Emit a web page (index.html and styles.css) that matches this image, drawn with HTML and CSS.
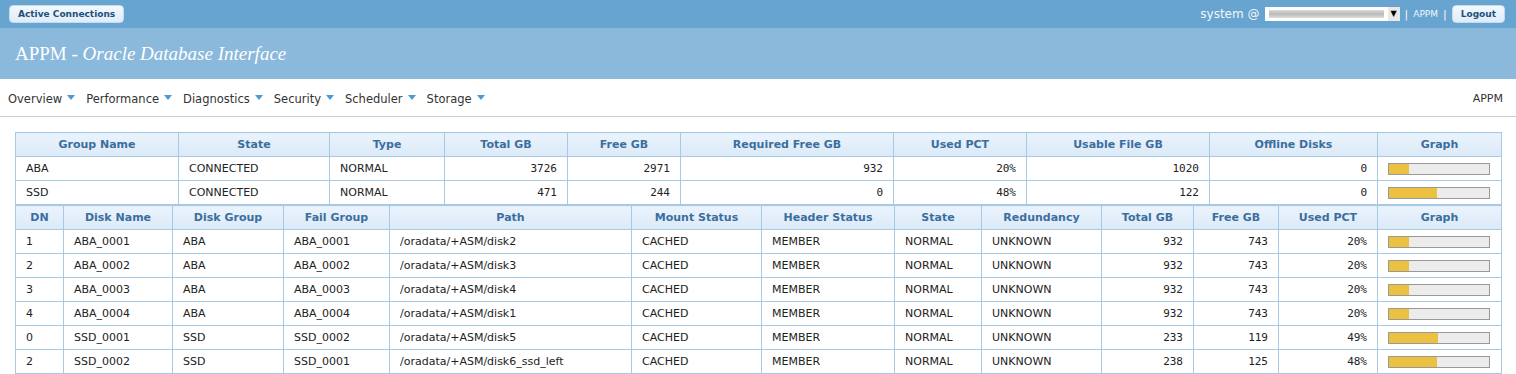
FILE: index.html
```html
<!DOCTYPE html>
<html lang="en">
<head>
    <meta charset="UTF-8">
    <title>APPM - Oracle Database Interface</title>
    <link rel="stylesheet" href="styles.css">
</head>
<body>
    <div class="topbar">
        <button class="btn">Active Connections</button>
        <div class="user-box">
            <span class="user">system @</span>
            <span class="db-select"><span class="blur"></span><span class="arrow">&#9660;</span></span>
            <span class="sep">|</span>
            <span class="small-link">APPM</span>
            <span class="sep">|</span>
            <button class="btn">Logout</button>
        </div>
    </div>
    <div class="title-band">
        <h1>APPM - <em>Oracle Database Interface</em></h1>
    </div>
    <div class="menu">
        <ul>
            <li>Overview<span class="caret"></span></li>
            <li>Performance<span class="caret"></span></li>
            <li>Diagnostics<span class="caret"></span></li>
            <li>Security<span class="caret"></span></li>
            <li>Scheduler<span class="caret"></span></li>
            <li>Storage<span class="caret"></span></li>
        </ul>
        <span class="menu-right">APPM</span>
    </div>

    <div class="content">
        <table class="grid groups">
            <colgroup>
                <col class="w163"><col class="w151"><col class="w115"><col class="w123"><col class="w113">
                <col class="w213"><col class="w133"><col class="w183"><col class="w168"><col class="w124">
            </colgroup>
            <thead>
                <tr>
                    <th>Group Name</th><th>State</th><th>Type</th><th>Total GB</th><th>Free GB</th>
                    <th>Required Free GB</th><th>Used PCT</th><th>Usable File GB</th><th>Offline Disks</th><th>Graph</th>
                </tr>
            </thead>
            <tbody id="groups"></tbody>
        </table>

        <table class="grid disks">
            <colgroup>
                <col class="w48"><col class="w109"><col class="w111"><col class="w106"><col class="w242">
                <col class="w130"><col class="w133"><col class="w87"><col class="w120"><col class="w92">
                <col class="w85"><col class="w99"><col class="w124">
            </colgroup>
            <thead>
                <tr>
                    <th>DN</th><th>Disk Name</th><th>Disk Group</th><th>Fail Group</th><th>Path</th>
                    <th>Mount Status</th><th>Header Status</th><th>State</th><th>Redundancy</th>
                    <th>Total GB</th><th>Free GB</th><th>Used PCT</th><th>Graph</th>
                </tr>
            </thead>
            <tbody id="disks"></tbody>
        </table>
    </div>

    <script>
        const grupos = [
            ['ABA', 'CONNECTED', 'NORMAL', 3726, 2971, 932, 20, 1020, 0],
            ['SSD', 'CONNECTED', 'NORMAL', 471, 244, 0, 48, 122, 0]
        ];
        const discos = [
            [1, 'ABA_0001', 'ABA', 'ABA_0001', '/oradata/+ASM/disk2', 932, 743, 20],
            [2, 'ABA_0002', 'ABA', 'ABA_0002', '/oradata/+ASM/disk3', 932, 743, 20],
            [3, 'ABA_0003', 'ABA', 'ABA_0003', '/oradata/+ASM/disk4', 932, 743, 20],
            [4, 'ABA_0004', 'ABA', 'ABA_0004', '/oradata/+ASM/disk1', 932, 743, 20],
            [0, 'SSD_0001', 'SSD', 'SSD_0002', '/oradata/+ASM/disk5', 233, 119, 49],
            [2, 'SSD_0002', 'SSD', 'SSD_0001', '/oradata/+ASM/disk6_ssd_left', 238, 125, 48]
        ];

        function barra(pct) {
            return `<div class="bar"><div class="fill" style="width:${pct}%"></div></div>`;
        }

        document.getElementById('groups').innerHTML = grupos.map(g => `
            <tr>
                <td>${g[0]}</td><td>${g[1]}</td><td>${g[2]}</td>
                <td class="num">${g[3]}</td><td class="num">${g[4]}</td><td class="num">${g[5]}</td>
                <td class="num">${g[6]}%</td><td class="num">${g[7]}</td><td class="num">${g[8]}</td>
                <td>${barra(g[6])}</td>
            </tr>`).join('');

        document.getElementById('disks').innerHTML = discos.map(d => `
            <tr>
                <td>${d[0]}</td><td>${d[1]}</td><td>${d[2]}</td><td>${d[3]}</td><td>${d[4]}</td>
                <td>CACHED</td><td>MEMBER</td><td>NORMAL</td><td>UNKNOWN</td>
                <td class="num">${d[5]}</td><td class="num">${d[6]}</td><td class="num">${d[7]}%</td>
                <td>${barra(d[7])}</td>
            </tr>`).join('');
    </script>
</body>
</html>
```
FILE: styles.css
```css
body {
    margin: 0;
    font-family: "DejaVu Sans", Verdana, sans-serif;
    font-size: 11px;
    color: #222;
    background: #fff;
}
.topbar {
    height: 28px;
    background-color: #68a4d0;
    display: flex;
    align-items: center;
    justify-content: space-between;
    padding: 0 11px 0 9px;
}
.btn {
    font-family: "DejaVu Sans", Verdana, sans-serif;
    font-size: 9px;
    font-weight: bold;
    color: #1d4f7c;
    background: linear-gradient(#f3f8fd, #dfecf8);
    border: 1px solid #c5dcef;
    border-radius: 4px;
    height: 18px;
    padding: 0 8px;
}
.user-box {
    display: flex;
    align-items: center;
    color: #f2f7fb;
}
.user {
    font-size: 12px;
    margin-right: 5px;
}
.db-select {
    display: flex;
    width: 135px;
    height: 14px;
    background: #fff;
    align-items: center;
}
.blur {
    flex: 1;
    height: 8px;
    margin: 0 4px;
    background: linear-gradient(#d0d0d0, #a8a8a8 50%, #d6d6d6);
    opacity: .8;
}
.arrow {
    width: 12px;
    height: 14px;
    font-size: 8px;
    line-height: 14px;
    text-align: center;
    color: #000;
    background: #e8e8e8;
}
.sep {
    margin: 0 5px;
    font-size: 11px;
}
.small-link {
    font-size: 9px;
}
.title-band {
    height: 51px;
    background-color: #8bb9dc;
    display: flex;
    align-items: center;
    padding-left: 15px;
}
.title-band h1 {
    margin: 0;
    font-family: "Liberation Serif", "Times New Roman", serif;
    font-weight: normal;
    font-size: 19px;
    color: #fff;
}
.menu {
    height: 35px;
    padding: 2px 13px 0 8px;
    border-bottom: 1px solid #ccc;
    display: flex;
    align-items: center;
    justify-content: space-between;
    font-size: 11.5px;
    color: #333;
}
.menu ul {
    list-style: none;
    margin: 0;
    padding: 0;
    display: flex;
}
.menu li {
    margin-right: 11px;
}
.caret {
    display: inline-block;
    border-left: 4px solid transparent;
    border-right: 4px solid transparent;
    border-top: 5px solid #4a9ad8;
    vertical-align: 3px;
    margin-left: 5px;
}
.menu-right {
    font-size: 11px;
}
.content {
    padding: 15px 15px 0 15px;
}
.grid {
    border-collapse: collapse;
    table-layout: fixed;
    width: 1487px;
    border: 1px solid #a9c8e2;
}
.grid th {
    height: 23px;
    padding: 0;
    font-size: 11px;
    font-weight: bold;
    color: #3b6e9e;
    background: linear-gradient(#eaf3fc, #dbeaf8);
    border: 1px solid #a9c8e2;
    text-align: center;
}
.grid td {
    height: 23px;
    padding: 0 10px;
    border: 1px solid #a9c8e2;
    white-space: nowrap;
    overflow: hidden;
}
.grid td.num {
    text-align: right;
    font-family: "DejaVu Sans Mono", monospace;
}
.w48 { width: 48px; }
.w85 { width: 85px; }
.w87 { width: 87px; }
.w92 { width: 92px; }
.w99 { width: 99px; }
.w106 { width: 106px; }
.w109 { width: 109px; }
.w111 { width: 111px; }
.w113 { width: 113px; }
.w115 { width: 115px; }
.w120 { width: 120px; }
.w123 { width: 123px; }
.w124 { width: 124px; }
.w130 { width: 130px; }
.w133 { width: 133px; }
.w151 { width: 151px; }
.w163 { width: 163px; }
.w168 { width: 168px; }
.w183 { width: 183px; }
.w213 { width: 213px; }
.w242 { width: 242px; }
.bar {
    width: 100px;
    height: 10px;
    border: 1px solid #999;
    background: #ececec;
}
.fill {
    height: 100%;
    background: #ecc040;
}
```
